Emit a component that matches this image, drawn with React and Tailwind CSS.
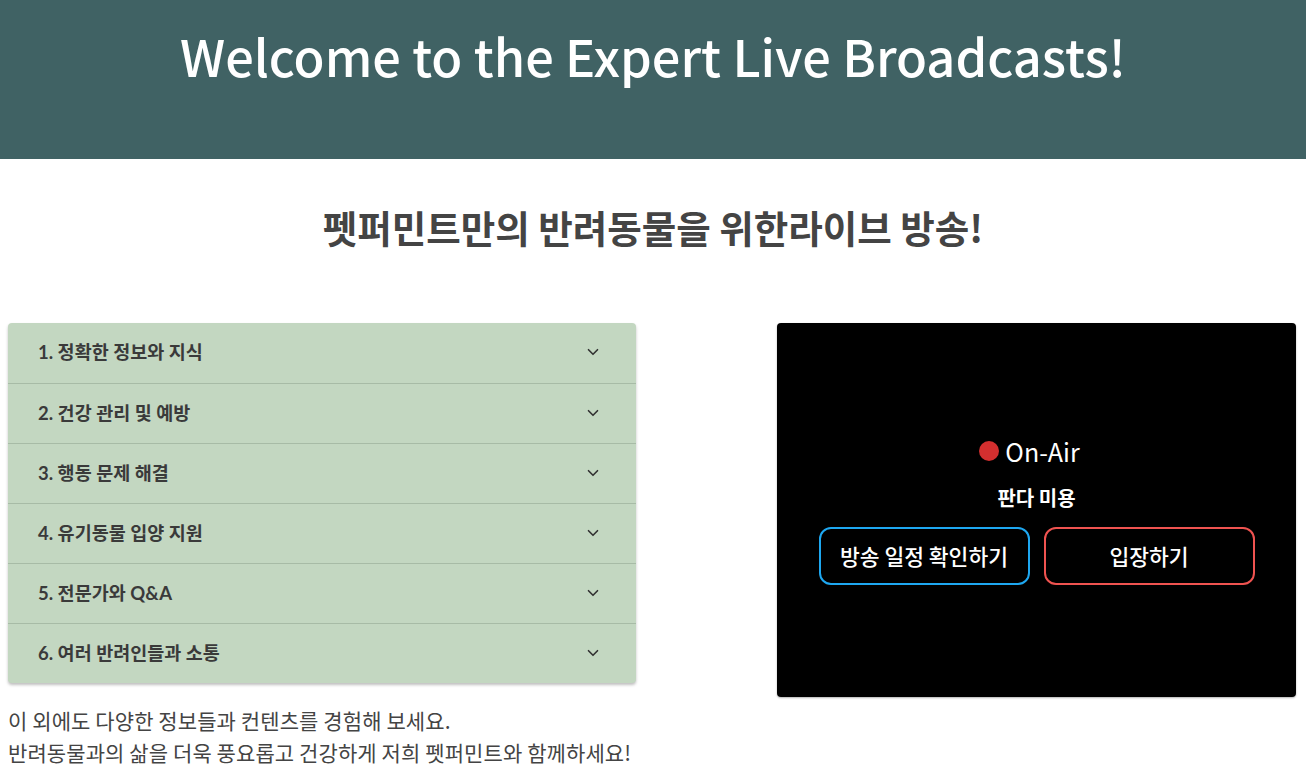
import React from 'react';
import { ChevronDown } from 'lucide-react';

const items = [
  '1. 정확한 정보와 지식',
  '2. 건강 관리 및 예방',
  '3. 행동 문제 해결',
  '4. 유기동물 입양 지원',
  '5. 전문가와 Q&A',
  '6. 여러 반려인들과 소통',
];

const kr = { fontFamily: '"Noto Sans CJK KR", "Noto Sans", sans-serif' };
const lato = { fontFamily: 'Lato, "Noto Sans CJK KR", sans-serif' };

export default function App() {
  return (
    <div className="min-h-screen bg-white" style={kr}>
      {/* Header */}
      <header className="h-[159px] bg-[#406264] flex justify-center pt-[20px]">
        <h1 className="text-[50.5px] leading-[70px] font-medium text-white">Welcome to the Expert Live Broadcasts!</h1>
      </header>

      <h2 className="mt-[41px] text-center text-[37.5px] leading-[54px] font-bold text-[#444]">
        펫퍼민트만의 반려동물을 위한라이브 방송!
      </h2>

      <div className="mt-[69px] flex justify-between px-2 pr-[10px]">
        {/* Accordion */}
        <div className="w-[628px]">
          <div className="bg-[#c3d7c1] rounded-[4px] shadow-[0_2px_3px_rgba(0,0,0,0.25)] overflow-hidden">
            {items.map((t, i) => (
              <div
                key={t}
                className={`h-[60px] flex items-center justify-between pl-[30px] pr-[34px] ${i > 0 ? 'border-t border-[#a7bba6]' : ''}`}
              >
                <span className="text-[18.5px] font-bold text-[#3a3a3a]" style={lato}>{t}</span>
                <ChevronDown className="w-[18px] h-[18px] text-[#333] -mt-[2px]" strokeWidth={2.2} />
              </div>
            ))}
          </div>
          <p className="mt-[21px] text-[21px] leading-[32px] text-[#444] tracking-[0.1px]">
            이 외에도 다양한 정보들과 컨텐츠를 경험해 보세요.
            <br />
            반려동물과의 삶을 더욱 풍요롭고 건강하게 저희 펫퍼민트와 함께하세요!
          </p>
        </div>

        {/* Live box */}
        <div className="w-[519px] h-[374px] bg-black rounded-[4px] shadow-[0_1px_2px_rgba(0,0,0,0.3)] flex flex-col items-center pt-[112px]">
          <div className="flex items-center gap-[6px] text-white pr-[14px]">
            <span className="w-5 h-5 rounded-full bg-[#d32f2f]" />
            <span className="text-[25px] leading-[32px]">On-Air</span>
          </div>
          <div className="mt-[18px] text-[20px] leading-[26px] font-bold text-white">판다 미용</div>
          <div className="mt-[16px] flex gap-[14px]">
            <button className="w-[211px] h-[58px] rounded-[12px] border-2 border-[#1ea7f0] text-white text-[21.5px] font-medium">
              방송 일정 확인하기
            </button>
            <button className="w-[211px] h-[58px] rounded-[12px] border-2 border-[#ef5350] text-white text-[21.5px] font-medium">
              입장하기
            </button>
          </div>
        </div>
      </div>
    </div>
  );
}
